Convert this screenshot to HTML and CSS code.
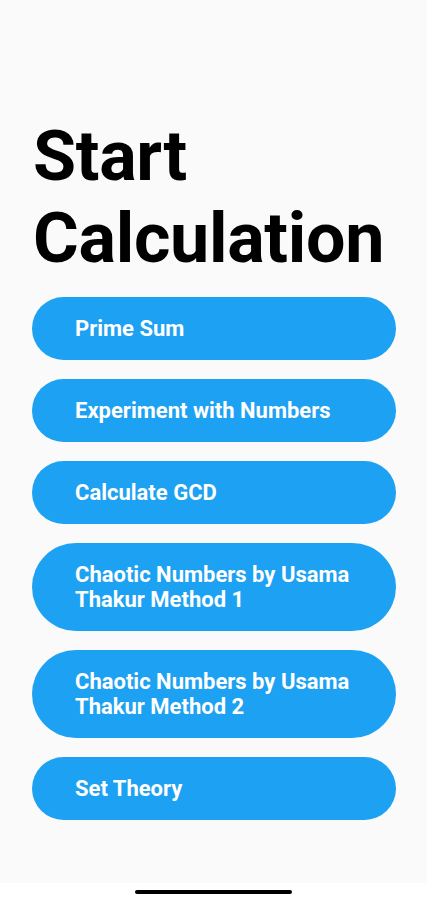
FILE: index.html
```html
<!DOCTYPE html>
<html lang="en">
<head>
  <meta charset="UTF-8">
  <meta name="viewport" content="width=device-width, initial-scale=1.0">
  <title>Start Calculation</title>
  <link rel="stylesheet" href="styles.css">
</head>
<body>
  <div class="screen">
    <div class="content">
      <h1>Start Calculation</h1>
      <div class="menu">
        <button class="menu-btn">Prime Sum</button>
        <button class="menu-btn">Experiment with Numbers</button>
        <button class="menu-btn">Calculate GCD</button>
        <button class="menu-btn tall">Chaotic Numbers by Usama Thakur Method 1</button>
        <button class="menu-btn tall">Chaotic Numbers by Usama Thakur Method 2</button>
        <button class="menu-btn">Set Theory</button>
      </div>
    </div>
    <div class="home-bar"><span></span></div>
  </div>
</body>
</html>
```

FILE: styles.css
```css
body {
  margin: 0;
  font-family: Roboto, "Liberation Sans", sans-serif;
  background: #fafafa;
}
.screen {
  width: 427px;
  height: 900px;
  display: flex;
  flex-direction: column;
}
.content {
  flex: 1;
  padding: 115px 31px 0 32px;
}
h1 {
  margin: 0 0 18px 1px;
  font-size: 70px;
  font-weight: 700;
  line-height: 82px;
  color: #000;
  letter-spacing: -0.3px;
}
.menu {
  display: flex;
  flex-direction: column;
  gap: 19px;
}
.menu-btn {
  display: block;
  width: 100%;
  min-height: 63px;
  padding: 0 30px 0 43px;
  border: none;
  border-radius: 44px;
  background: #1da1f2;
  color: #fff;
  font-family: inherit;
  font-size: 22px;
  font-weight: 700;
  line-height: 25px;
  text-align: left;
}
.menu-btn.tall {
  min-height: 88px;
}
.home-bar {
  height: 10px;
  background: #fff;
  display: flex;
  justify-content: center;
  padding-top: 7px;
}
.home-bar span {
  width: 157px;
  height: 4px;
  border-radius: 2px;
  background: #000;
}
```
